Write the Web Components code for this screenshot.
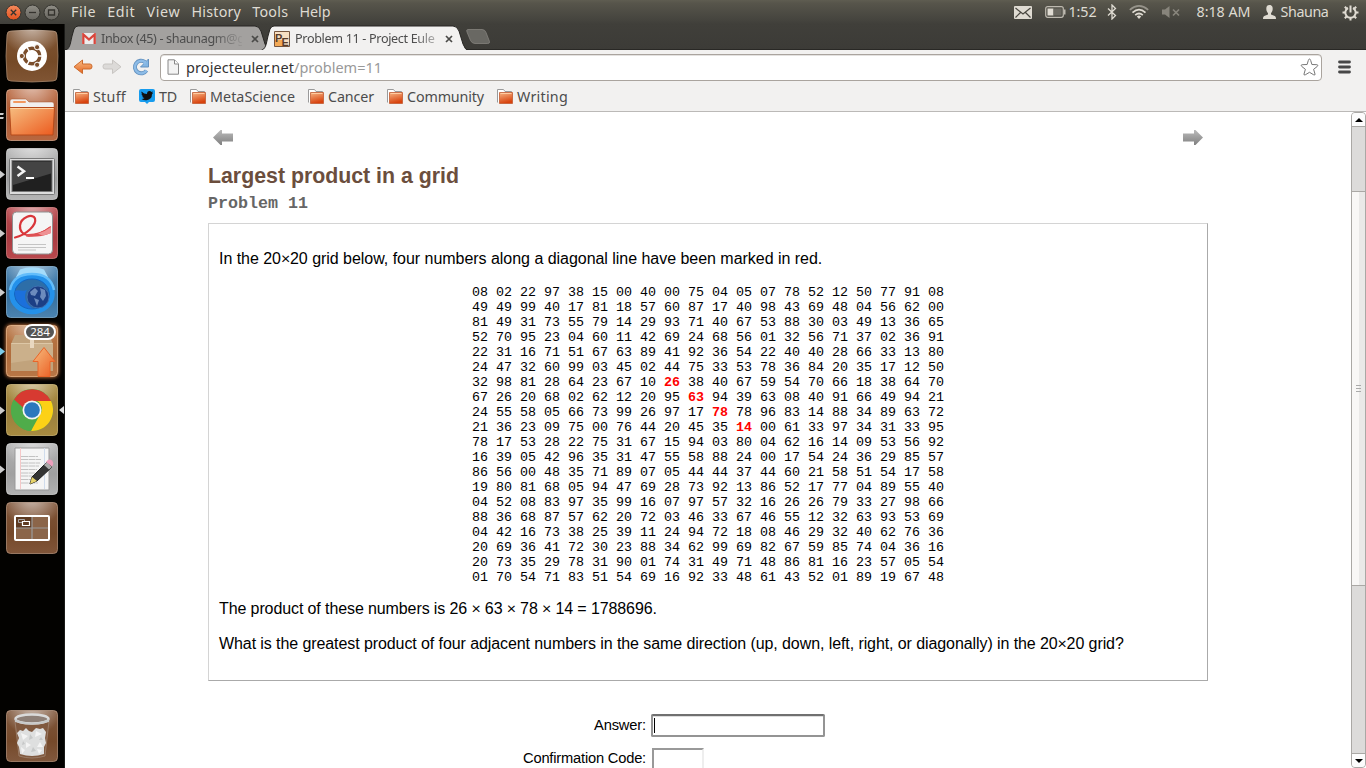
<!DOCTYPE html>
<html lang="en">
<head>
<meta charset="utf-8">
<title>Problem 11 - Project Euler</title>
<style>
html,body{margin:0;height:100%;overflow:hidden;background:#000;font-family:"Noto Sans","Open Sans",sans-serif}
</style>
</head>
<body>
<ubuntu-desktop></ubuntu-desktop>
<script>
const define = (name, html, setup) => {
  const t = document.createElement('template');
  t.innerHTML = html;
  customElements.define(name, class extends HTMLElement {
    connectedCallback() {
      if (this.shadowRoot) return;
      this.attachShadow({mode: 'open'}).append(t.content.cloneNode(true));
      if (setup) setup.call(this, this.shadowRoot);
    }
  });
};

/* A single line of text spaced to an exact advance width. */
define('fit-text', `<style>:host{display:block;white-space:nowrap;flex:none}span{display:inline-block;white-space:pre}</style><span><slot></slot></span>`, function (r) {
  const w = +this.getAttribute('w'), s = r.querySelector('span');
  this.style.width = w + 'px';
  const n = this.textContent.length;
  s.style.letterSpacing = ((w - s.getBoundingClientRect().width) / n) + 'px';
});

define('times-sign', `<style>:host{display:inline-block;width:9px;text-align:center;letter-spacing:0;color:#000;font:400 16px/16px Lato,"Liberation Sans",sans-serif}</style><slot></slot>`);

define('window-button', `<style>:host{display:block;width:17px;height:17px}svg{display:block}</style>
<svg width="17" height="17" viewBox="0 0 17 17"><defs><linearGradient id="c" x2="0" y2="1"><stop offset="0" stop-color="#f58a5c"/><stop offset="1" stop-color="#e2521f"/></linearGradient><linearGradient id="g" x2="0" y2="1"><stop offset="0" stop-color="#908e86"/><stop offset="1" stop-color="#66645e"/></linearGradient></defs>
<circle id="b" cx="8.5" cy="8.5" r="7.5" stroke="#35342f" stroke-width="1"/><path id="p" fill="none" stroke="#35332e" stroke-width="1.3"/></svg>`, function (r) {
  const k = this.getAttribute('kind');
  r.getElementById('b').setAttribute('fill', k === 'close' ? 'url(#c)' : 'url(#g)');
  r.getElementById('p').setAttribute('d', {close: 'M5.8 5.8l5.4 5.4M11.2 5.8l-5.4 5.4', min: 'M5 8.5h7', max: 'M5.5 6h6v5h-6z'}[k]);
});

define('top-panel', `<style>
:host{display:flex;align-items:center;height:24px;box-sizing:border-box;padding:0 7.500px 0 5px;background:linear-gradient(#5f5d51 0,#57554b 3px,#45443e 20px,#403f3a 24px);color:#dfdbd2;font-size:14.3px;line-height:24px}
.w{display:flex;gap:2px;margin-right:11px}nav{display:flex}nav fit-text{margin-right:11.2px}.r{display:flex;margin-left:auto;align-items:center}svg{display:block;flex:none}
</style>
<div class="w"><window-button kind="close"></window-button><window-button kind="min"></window-button><window-button kind="max"></window-button></div>
<nav><fit-text w="25">File</fit-text><fit-text w="28">Edit</fit-text><fit-text w="34">View</fit-text><fit-text w="49.5">History</fit-text><fit-text w="36">Tools</fit-text><fit-text w="31">Help</fit-text></nav>
<div class="r">
<svg width="18" height="13" viewBox="0 0 18 13"><rect width="18" height="13" rx="1" fill="#dfdbd2"/><path d="M1.5 2l7.5 6 7.5-6M1.5 11.5l5-5M16.5 11.5l-5-5" fill="none" stroke="#48463f" stroke-width="1.2"/></svg>
<svg style="margin-left:13px" width="21" height="12" viewBox="0 0 21 12"><rect x=".7" y=".7" width="17.6" height="10.6" rx="2" fill="none" stroke="#bdb9af" stroke-width="1.2"/><rect x="2.5" y="2.5" width="6" height="7" fill="#dfdbd2"/><path d="M8.500 2.500h8v7h-8z" fill="#6b6961"/><rect x="19" y="3.500" width="1.500" height="5" fill="#bdb9af"/></svg>
<fit-text style="margin-left:3px" w="28">1:52</fit-text>
<svg style="margin-left:10px" width="10" height="16" viewBox="0 0 10 16"><path d="M1 4.500l7.500 7L5 15V1l3.500 3.500L1 11.500" fill="none" stroke="#dfdbd2" stroke-width="1.300"/></svg>
<svg style="margin-left:12px" width="20" height="14" viewBox="0 0 20 14"><g fill="none" stroke-width="1.700"><path d="M.8 4.800Q10-3 19.200 4.800" stroke="#96938a"/><path d="M3.500 7.600Q10 1.800 16.500 7.600" stroke="#dfdbd2"/><path d="M6.200 10.200Q10 6.800 13.800 10.200" stroke="#dfdbd2"/></g><path d="M7.800 11.500Q10 9.700 12.200 11.500L10 14z" fill="#dfdbd2"/></svg>
<svg style="margin-left:13px" width="19" height="12" viewBox="0 0 19 12"><path d="M0 3.500h3L7.500 0v12L3 8.500H0z" fill="#88857c"/><path d="M11 3.500l6 6M17 3.500l-6 6" stroke="#88857c" stroke-width="1.700"/></svg>
<fit-text style="margin-left:16px" w="54">8:18 AM</fit-text>
<svg style="margin-left:12px" width="13" height="14" viewBox="0 0 13 14"><path d="M6.500 0C4.100 0 3.300 1.600 3.300 3.800c0 2 .8 3.500 1.700 4.400v1.300L1.200 11C.4 11.400 0 12.500 0 14h13c0-1.500-.4-2.600-1.200-3L8 9.500V8.200c.9-.9 1.700-2.400 1.700-4.400C9.700 1.600 8.900 0 6.500 0z" fill="#dfdbd2"/></svg>
<fit-text style="margin-left:5px" w="48">Shauna</fit-text>
<svg style="margin-left:13px" width="17" height="17" viewBox="0 0 17 17"><g fill="none" stroke="#dfdbd2" stroke-width="2"><path d="M6 4a5.200 5.200 0 1 0 5 0"/><path d="M8.500 1.500v7"/><path d="M.5 8.500h3M13.500 8.500h3M2.800 2.800l2 2M14.200 2.800l-2 2M2.800 14.200l2-2M14.200 14.200l-2-2M8.500 13.500v3"/></g></svg>
</div>`);

const ICONS = {
ubuntu: ['#a7886f', '#754a27', '#805534', `<circle cx="26" cy="26" r="15" fill="#fff"/><circle cx="26" cy="26" r="7.800" fill="none" stroke="#7b4e2c" stroke-width="3.400"/><g stroke="#fff" stroke-width="1.500"><path d="M26 26l-6-10.400M26 26h12M26 26l-6 10.400" /></g><circle cx="26" cy="26" r="5.800" fill="#fff"/><g fill="#7b4e2c" stroke="#fff" stroke-width="1"><circle cx="15.800" cy="26" r="2.600"/><circle cx="31.100" cy="17.200" r="2.600"/><circle cx="31.100" cy="34.800" r="2.600"/></g>`],
files: ['#d8a88e', '#ad5d38', '#b9673f', `<path d="M4 12q0-2 2-2h14l3 3h23q2 0 2 2v5H4z" fill="#f1efee" stroke="#a65028" stroke-width=".5"/><rect x="7" y="12" width="13" height="2" rx="1" fill="#f2985f"/><path d="M3.500 18.500h45L47 46H5z" fill="url(#fold)" stroke="#b64a1a"/><path d="M4.500 19.500h43" stroke="#ffd2a0"/>`],
terminal: ['#d2d2d2', '#9c9c9c', '#b6b6b6', `<rect x="3.500" y="10.500" width="45" height="36" rx="1" fill="#ddd" stroke="#777"/><rect x="6" y="12.500" width="40" height="31" fill="#202020" stroke="#777"/><path d="M7 13.500h38v12L7 37z" fill="#444"/><path d="M11.500 18.500l6.500 4.700-6.500 4.800" fill="none" stroke="#f4f4f4" stroke-width="2.500"/><path d="M20 30h8" stroke="#fff" stroke-width="2"/>`],
reader: ['#d68080', '#aa3c42', '#b9484d', `<rect x="6.500" y="5" width="40" height="42" rx="4" fill="#f5f5f5" stroke="#909090"/><g fill="none" stroke="#d9363a" stroke-linecap="round"><path d="M9 30.500C20 28 31 18 29 11.500 27 6 15 10 14 18.500 13.500 24 17 28 23 28.500" stroke-width="2.200"/><path d="M22 28.500Q34 28.500 44 20.500" stroke-width="2"/></g><path d="M20 27Q33 28 45 19v7Q33 31 20 29.500z" fill="#df5053"/><path d="M32 26.500q7-2 13-6.500v6q-5 2-9 2.500z" fill="#ee9294"/><path d="M12 37.500h28M12 40.500h28M12 43h18" stroke="#c4c4c4"/>`],
globe: ['#87b5d8', '#37719f', '#4b83b0', `<path d="M10 11L14 3.500Q26-1 38 3.500L42 11z" fill="#a4dbfa"/><ellipse cx="26" cy="28" rx="20" ry="17.500" fill="#2d6ea8" stroke="#2491ea" stroke-width="5.500"/><path d="M4 24Q7 8 26 8t22 16" fill="none" stroke="#62bdfb" stroke-width="2.500"/><ellipse cx="26" cy="28" rx="17.500" ry="15" fill="#2d6ea8" stroke="#0f66c6"/><path d="M9 25c-1 11 8 18 18 17.500-8-4-10-13-6-18.500-5 2-9-1-12 1z" fill="#1b70dc"/><circle cx="32" cy="31" r="11" fill="#1c3f85" stroke="#3f6fb0"/><path d="M24 26l5-4 3 3-3 5-4-1zM34 22l5 2 1 6-3 5-3-4 1-4zM28 32l5 2-2 6z" fill="#6c8bbd"/>`],
updates: ['#e7b58a', '#b06c3c', '#b87746', `<path d="M9 10h34l4 9H5z" fill="#c0a27c"/><path d="M5 18h42v28H5z" fill="#c1a37c"/><path d="M5 18h42v14L5 38z" fill="#cbb08b"/><path d="M5.500 18.500h41" stroke="#ddc7a6"/><path d="M24 14h4v9h-4z" fill="#e9d8c0"/><path d="M38 22.500l11 14h-5v15H32v-15h-5z" fill="url(#fold)" stroke="#e8652a"/>`],
chrome: ['#d0b875', '#9b803e', '#a88b40', `<circle cx="26" cy="26" r="21" fill="#4fac4a"/><path d="M8 15.500A21 21 0 0 1 45 17H26a9 9 0 0 0-8.500 7z" fill="#d73a31"/><path d="M45 17a21 21 0 0 1-20 30l9-16.500A9 9 0 0 0 31 17z" fill="#fcd116"/><path d="M8 15.500l9.500 16A9 9 0 0 0 29 34.500L25 47A21 21 0 0 1 8 15.500z" fill="#4fac4a"/><circle cx="26" cy="26" r="9.500" fill="#f4f4f4"/><circle cx="26" cy="26" r="7.800" fill="#2b78bd"/>`],
editor: ['#d5d5d5', '#a0a0a0', '#b1b1b1', `<path d="M9 5h34v42H9z" fill="#f5f5f5" stroke="#999"/><path d="M14.500 5v41" stroke="#f5c8c8"/><path d="M38.500 5v41" stroke="#d0dcec"/><path d="M15 13.500h17M15 16.500h20M15 20h19M15 23h18M15 26.500h16M15 30h14M15 33h15M15 36.500h11M15 40h17" stroke="#c2c2c2" stroke-dasharray="7 .5"/><path d="M24 41l2-7 15-15 5 5-15 14z" fill="#343434" stroke="#222"/><path d="M24 41l2-7 5 4z" fill="#e7d36a"/><path d="M38 22l3-3 5 5-3 2.500z" fill="#aaa"/><path d="M40 19q3-4 6-1.500 2.500 3 0 6z" fill="#eda0bd"/>`],
workspace: ['#b5927a', '#75492a', '#805539', `<rect x="9" y="14" width="34" height="24" rx="1" fill="#8b6549" stroke="#fff" stroke-width="2"/><path d="M10 15h16v11H10z" fill="#5f3b22"/><path d="M26 15v22M10 26h32" stroke="#9b9b9b" stroke-width="1.200"/><path d="M12.500 17.500h6v3h-6z" fill="none" stroke="#aaa"/><path d="M16.500 19.500h7v4h-7z" fill="#5f3b22" stroke="#fff" stroke-width="1.200"/>`],
trash: ['#b5927a', '#75492a', '#80583d', `<path d="M9 11h34l-4 35q-13 4-26 0z" fill="#80593f" stroke="#a58b79" stroke-width=".7"/><path d="M11 23l3-3 3 1 3-3 3 3 3 1 4-4 4 1 3-1 3 4-1 6 1 5-2 4v7q-12 4-24 0l-1-7-2-4 2-5z" fill="#dedfdf"/><path d="M15 23l7 3-5 4zM30 21l6 3-7 3zM20 32l5 3-5 3zM34 32l3 5-6 0zM15 37l4 3-3 4zM31 39l5 1-3 4z" fill="#f4f4f4"/><path d="M24 24l3 4-4 2zM27 37l3 4-5 1zM17 31l2 3-3 1zM35 27l2 3-4 0z" fill="#c6c8c8"/><ellipse cx="26" cy="9" rx="16.500" ry="4.500" fill="#8e8078" stroke="#dadada" stroke-width="2.500"/><path d="M9 9q17 8 34 0v3q-17 5-34 0z" fill="#c7c9c9"/>`]
};
define('launcher-icon', `<style>:host{display:block;position:relative;width:65px;height:52px;flex:none}
svg.i{display:block;margin-left:6px;overflow:visible}.a{position:absolute;top:22px;left:0}.ar{position:absolute;top:22px;right:1px}
.b{position:absolute;left:24px;top:-1px;width:28px;height:12px;border:2px solid #fff;border-radius:8px;background:#555;color:#fff;font:11.500px/12px "Noto Sans",sans-serif;text-align:center}
:host([glow]) .i{filter:drop-shadow(0 0 2px #ff9650)}</style>`, function (r) {
  const [hi, mid, low, art] = ICONS[this.getAttribute('name')];
  const mark = this.getAttribute('mark'), badge = this.getAttribute('badge');
  const shape = this.getAttribute('name') === 'ubuntu' ? '<path d="M5 1Q26-1 47 1q4 0 4 4 2 21 0 42 0 4-4 4-21 2-42 0-4 0-4-4-2-21 0-42 0-4 4-4z"' : '<rect x=".5" y=".5" width="51" height="51" rx="4"';
  const h = document.createElement('template');
  h.innerHTML = `<svg class="i" width="52" height="52" viewBox="0 0 52 52"><defs><radialGradient id="s" cx=".5" cy="-.1" r=".6"><stop offset="0" stop-color="#fff" stop-opacity=".6"/><stop offset="1" stop-color="#fff" stop-opacity="0"/></radialGradient><linearGradient id="bg" x2="0" y2="1"><stop offset="0" stop-color="${low}"/><stop offset=".6" stop-color="${mid}"/><stop offset="1" stop-color="${low}"/></linearGradient><linearGradient id="fold" x2="1" y2="1"><stop offset="0" stop-color="#f6bd80"/><stop offset="1" stop-color="#ec5a1e"/></linearGradient></defs>${shape} fill="url(#bg)" stroke="${hi}" stroke-opacity=".75"/>${shape} fill="url(#s)"/>${art}</svg>`
    + (mark ? `<svg class="a" width="5" height="9"><path d="${mark === 'two' ? 'M0 2h3l1 .5L3 4H0zM0 6h3l1 .5L3 8H0z' : 'M0 .5l5 4-5 4z'}" fill="${mark === 'blue' ? '#7ccbe8' : '#ccc'}"/></svg>` : '')
    + (this.hasAttribute('active') ? '<svg class="ar" width="5" height="8"><path d="M5 0v8L0 4z" fill="#ddd"/></svg>' : '')
    + (badge ? `<div class="b">${badge}</div>` : '');
  r.append(h.content);
});

define('app-launcher', `<style>:host{display:flex;flex-direction:column;gap:7px;box-sizing:border-box;padding:6px 0;width:65px;background:#030200;border-right:1px solid #1a1a18}.t{margin-top:auto}</style>
<launcher-icon name="ubuntu"></launcher-icon><launcher-icon name="files" mark="two"></launcher-icon><launcher-icon name="terminal" mark="one"></launcher-icon><launcher-icon name="reader" mark="one"></launcher-icon><launcher-icon name="globe" mark="one"></launcher-icon><launcher-icon name="updates" mark="blue" badge="284" glow></launcher-icon><launcher-icon name="chrome" mark="one" active></launcher-icon><launcher-icon name="editor" mark="one"></launcher-icon><launcher-icon name="workspace"></launcher-icon><launcher-icon class="t" name="trash"></launcher-icon>`);

define('browser-tab', `<style>:host{display:grid;height:26px;flex:none}:host>*{grid-area:1/1}svg{display:block}
.c{display:flex;align-items:center;padding:2px 0 0 17px;font-size:12.600px;line-height:20px;color:#4c4c4c}.f{width:141px;margin-left:5px;overflow:hidden;-webkit-mask-image:linear-gradient(90deg,#000 112px,transparent 144px)}.x{margin-left:9px}
.c{padding-top:3px}:host([active]) .c{padding:3px 0 0 13px}:host([active]) .f{-webkit-mask-image:linear-gradient(90deg,#000 118px,transparent 155px)}:host([active]) .x{margin-left:9px}</style>
<svg id="s" height="26"><path stroke="#262522"/></svg><div class="c"><slot name="icon"></slot><div class="f"><slot></slot></div><svg class="x" width="8" height="8"><path d="M1 1l6 6M7 1L1 7" stroke="#4a4a48" stroke-width="1.700"/></svg></div>`, function (r) {
  const w = +this.getAttribute('w'), a = this.hasAttribute('active'), s = r.getElementById('s'), p = s.firstChild;
  s.setAttribute('width', w);
  p.setAttribute('fill', a ? '#f2f1f0' : '#a3a19f');
  p.setAttribute('d', `M-1 27C5 25 5 21 7 12L9 5Q10.500 2 13 2H${w - 15}Q${w - 11} 2 ${w - 9} 7L${w - 5} 20Q${w - 3} 26 ${w + 1} 27`);
});

define('tab-strip', `<style>:host{display:flex;height:26px;background:linear-gradient(#403f3a,#3c3b37);box-shadow:inset 0 -1px #292825}.s{margin-left:-9px;z-index:1}svg{display:block}.n{margin:5px 0 0 -3px}</style>
<browser-tab w="205"><svg slot="icon" width="14" height="11" viewBox="0 0 14 11"><path d="M0 0h14v11H0z" fill="#ececec"/><path d="M1.300 11V1.500L7 6.500l5.700-5V11" fill="none" stroke="#d8463c" stroke-width="2.300"/></svg><fit-text w="155">Inbox (45) - shaunagm@gm</fit-text></browser-tab>
<browser-tab class="s" w="207" active><svg slot="icon" width="16" height="16" viewBox="0 0 16 16"><path d="M.5.5h15v15H.5z" fill="#f7dfc3" stroke="#765640"/><path d="M1 9h7v6H1z" fill="#f3a956"/><text x="1" y="10.500" font-family="Liberation Sans" font-weight="bold" font-size="11" fill="#583b29">P</text><text x="7.500" y="14.500" font-family="Liberation Sans" font-weight="bold" font-size="11" fill="#583b29">E</text></svg><fit-text w="139.500">Problem 11 - Project Eule</fit-text></browser-tab>
<svg class="n" width="26" height="15"><path d="M3 .5h14q3 0 4 3l3.500 9q.5 2-2 2H10q-3 0-4.500-3L2 3Q1 .5 3 .5z" fill="#696863" stroke="#85837e" stroke-width=".8"/></svg>`);

define('tool-bar', `<style>:host{display:flex;align-items:center;height:34px;box-sizing:border-box;padding:0 14px 0 8px;background:#f2f1f0}
svg{display:block;flex:none}.o{display:flex;align-items:center;width:1162px;height:27px;box-sizing:border-box;border:1px solid #aaa49e;border-radius:4px;background:#fff;box-shadow:inset 0 1px #e4e2e0;font-size:14.500px;line-height:24px;margin:1px 16px 0 10px;padding:0 2px 1px 6px;color:#333}.g{color:#999}.st{margin-left:auto}</style>
<svg width="20" height="16" viewBox="0 0 20 16"><defs><linearGradient id="o" x2="0" y2="1"><stop stop-color="#f9bd86"/><stop offset="1" stop-color="#e4641f"/></linearGradient></defs><path d="M9.500 1v4H17q2 0 2 2.500T17 10H9.500v4.500L1 7.800z" fill="url(#o)" stroke="#cc6a2c" stroke-linejoin="round"/></svg>
<svg style="margin-left:9px" width="20" height="16" viewBox="0 0 20 16"><path d="M10.500 1v4H3Q1 5 1 7.500T3 10h7.500v4.500L19 7.800z" fill="#dcdad8" stroke="#c8c5c2" stroke-linejoin="round"/></svg>
<svg style="margin-left:10px" width="18" height="18" viewBox="0 0 18 18"><path d="M14.500 12.500A6.300 6.300 0 1 1 13 4" fill="none" stroke="#6391bf" stroke-width="4"/><path d="M16.500 1v8H8.500z" fill="#82b5e3" stroke="#6391bf"/><path d="M14.500 12.500A6.300 6.300 0 1 1 13 4l-1 2" fill="none" stroke="#8dbce7" stroke-width="2.400"/></svg>
<div class="o"><svg width="12" height="16" viewBox="0 0 12 16"><path d="M1 .8h6.500L11.500 5v10.200H1z" fill="#f3f3f3" stroke="#888"/><path d="M7.500 1v4h4" fill="#fff" stroke="#888"/></svg><fit-text style="margin-left:7px" w="108">projecteuler.net</fit-text><fit-text class="g" w="88">/problem=11</fit-text>
<svg class="st" width="19" height="18" viewBox="0 0 19 18"><path d="M9.500 1q.8 0 1.200 1.500l1.200 4 5 .2q2 .5.300 1.800l-3.600 2.800 1.400 4.700q.2 1.600-1.300.8L9.500 14.300l-4.200 2.500q-1.500.8-1.300-.8l1.400-4.700-3.600-2.800q-1.700-1.300.3-1.800l5-.2 1.200-4Q8.700 1 9.500 1z" fill="#fff" stroke="#777"/></svg></div>
<svg width="13" height="14"><path d="M1.500 2h10M1.500 7h10M1.500 12h10" stroke="#474747" stroke-width="2.800" stroke-linecap="round"/></svg>`);

define('bookmark-item', `<style>:host{display:flex;align-items:center;flex:none}svg{display:block;margin-right:4px}</style><svg id="i" width="16" height="15" viewBox="0 0 16 15"></svg><slot></slot>`, function (r) {
  r.getElementById('i').innerHTML = this.hasAttribute('bird')
    ? '<path d="M2 0h12q2 0 2 2v9q0 2-2 2h-4l-2 2-2-2H2q-2 0-2-2V2q0-2 2-2z" fill="#179cee"/><path d="M2.500 2.500Q5 5 8 5q0-3 2.500-3 1.200 0 2 1l1.500-.5-.8 1.500.8.300-1 1q0 5.200-5.500 6-3 .2-5-1.300 2 0 3-.9-2-.4-2.300-1.800h1Q2.500 6.500 2.500 4.800l.8.300Q2 4 2.500 2.500z" fill="#111"/>'
    : '<defs><linearGradient id="q" x2=".3" y2="1"><stop stop-color="#f6b685"/><stop offset="1" stop-color="#d8420d"/></linearGradient></defs><path d="M.5 13.500V.5h6l1.500 2h6.500v3" fill="#fff" stroke="#9a9a9a"/><path d="M2.500 3.500h13v11h-13z" fill="url(#q)" stroke="#c25a31" stroke-width=".8"/><path d="M3.500 4.500h11" stroke="#ffcba0"/>';
});
define('bookmarks-bar', `<style>:host{display:flex;align-items:center;height:28px;box-sizing:border-box;padding:0 8px 2px;background:#f2f1f0;border-bottom:1px solid #bbb9b7;color:#4c4c4c;font-size:14.300px;line-height:24px}bookmark-item{margin-right:13px}</style>
<bookmark-item><fit-text w="33">Stuff</fit-text></bookmark-item><bookmark-item bird><fit-text w="18">TD</fit-text></bookmark-item><bookmark-item><fit-text w="85">MetaScience</fit-text></bookmark-item><bookmark-item><fit-text w="46">Cancer</fit-text></bookmark-item><bookmark-item><fit-text w="77">Community</fit-text></bookmark-item><bookmark-item><fit-text w="51">Writing</fit-text></bookmark-item>`);

define('number-grid', `<style>:host{display:block;font:13.333px/15px "Liberation Mono",monospace;text-align:center;white-space:pre}b{color:#f00}</style>`, function (r) {
  const rows = `08 02 22 97 38 15 00 40 00 75 04 05 07 78 52 12 50 77 91 08
49 49 99 40 17 81 18 57 60 87 17 40 98 43 69 48 04 56 62 00
81 49 31 73 55 79 14 29 93 71 40 67 53 88 30 03 49 13 36 65
52 70 95 23 04 60 11 42 69 24 68 56 01 32 56 71 37 02 36 91
22 31 16 71 51 67 63 89 41 92 36 54 22 40 40 28 66 33 13 80
24 47 32 60 99 03 45 02 44 75 33 53 78 36 84 20 35 17 12 50
32 98 81 28 64 23 67 10 26 38 40 67 59 54 70 66 18 38 64 70
67 26 20 68 02 62 12 20 95 63 94 39 63 08 40 91 66 49 94 21
24 55 58 05 66 73 99 26 97 17 78 78 96 83 14 88 34 89 63 72
21 36 23 09 75 00 76 44 20 45 35 14 00 61 33 97 34 31 33 95
78 17 53 28 22 75 31 67 15 94 03 80 04 62 16 14 09 53 56 92
16 39 05 42 96 35 31 47 55 58 88 24 00 17 54 24 36 29 85 57
86 56 00 48 35 71 89 07 05 44 44 37 44 60 21 58 51 54 17 58
19 80 81 68 05 94 47 69 28 73 92 13 86 52 17 77 04 89 55 40
04 52 08 83 97 35 99 16 07 97 57 32 16 26 26 79 33 27 98 66
88 36 68 87 57 62 20 72 03 46 33 67 46 55 12 32 63 93 53 69
04 42 16 73 38 25 39 11 24 94 72 18 08 46 29 32 40 62 76 36
20 69 36 41 72 30 23 88 34 62 99 69 82 67 59 85 74 04 36 16
20 73 35 29 78 31 90 01 74 31 49 71 48 86 81 16 23 57 05 54
01 70 54 71 83 51 54 69 16 92 33 48 61 43 52 01 89 19 67 48`.split('\n');
  rows.forEach((line, y) => {
    const d = document.createElement('div'), n = line.split(' ');
    if (y > 5 && y < 10) n[y + 2] = `<b>${n[y + 2]}</b>`;
    d.innerHTML = n.join(' ');
    r.append(d);
  });
});

define('scroll-bar', `<style>:host{display:flex;flex-direction:column;width:15px;height:656px;box-sizing:border-box;border:1px solid #aaa8a5;border-radius:4px;background:#dcdbda;flex:none}
.b{height:13px;display:flex;align-items:center;justify-content:center;background:#fcfcfc;border-radius:3px}.b.u{border-bottom:1px solid #aaa8a5;border-radius:3px 3px 0 0}.b.d{border-top:1px solid #aaa8a5;border-radius:0 0 3px 3px;margin-top:auto}
.t{margin-top:64px;height:393px;border:solid #aaa8a5;border-width:1px 0;background:linear-gradient(90deg,#f8f7f6 7px,#eae9e8 7px);display:flex;align-items:center;justify-content:center}svg{display:block}</style>
<div class="b u"><svg width="8" height="4"><path d="M0 4h8L4 0z"/></svg></div><div class="t"><svg width="5" height="8"><path d="M0 .5h5M0 3.500h5M0 6.500h5" stroke="#aaa"/></svg></div><div class="b d"><svg width="8" height="4"><path d="M0 0h8L4 4z"/></svg></div>`);

define('problem-page', `<style>:host{display:block;width:1000px;margin:0 auto;font-family:"Liberation Sans",sans-serif;color:#000}
.n{display:flex;justify-content:space-between;padding:17px 5px 1px}svg{display:block}
h1{margin:17px 0 0;font-size:21.333px;line-height:26px;color:#6b4e3d}h2{margin:6px 0 0;font:bold 16.667px/18px "Liberation Mono",monospace;color:#666}
.box{box-sizing:border-box;height:458px;margin-top:10px;border:1px solid;border-color:#d4d4d4 #aaa #aaa #d4d4d4;padding:25px 10px 0;font-size:16px;line-height:20px}
number-grid{margin:16px 0 14px}p{margin:0 0 15px}
form{display:grid;grid-template-columns:438px auto;column-gap:6px;justify-content:start;margin-top:33px;font-size:14.700px;line-height:23px}label{display:flex;justify-content:flex-end}
.a{margin-left:-1px;width:174px;height:23px;box-sizing:border-box;border:2px solid #949494;border-top-color:#707070;border-radius:2px;padding:2px 1px;box-shadow:inset 0 1px #ddd}.a span{display:block;width:1px;height:15px;background:#000}
.k{width:52px;height:23px;box-sizing:border-box;border:2px solid #999;border-right-color:#eee;border-bottom-color:#eee;margin-top:11px}.l{margin-top:10px}</style>
<div class="n"><svg width="20" height="16"><defs><linearGradient id="a" x2="0" y2="1"><stop stop-color="#bbb"/><stop offset="1" stop-color="#808080"/></linearGradient></defs><path d="M0 8.500l7.500-7.500H9v3.500h11v8H9V16H7.500z" fill="url(#a)"/></svg><svg width="20" height="16"><path d="M20 8.500l-7.500-7.500H11v3.500H0v8h11V16h1.500z" fill="url(#a)"/></svg></div>
<h1><fit-text w="251">Largest product in a grid</fit-text></h1><h2>Problem 11</h2>
<div class="box"><p><fit-text w="603.5">In the 20<times-sign>×</times-sign>20 grid below, four numbers along a diagonal line have been marked in red.</fit-text></p><number-grid></number-grid><p><fit-text w="438.5">The product of these numbers is 26 <times-sign>×</times-sign> 63 <times-sign>×</times-sign> 78 <times-sign>×</times-sign> 14 = 1788696.</fit-text></p><p><fit-text w="905">What is the greatest product of four adjacent numbers in the same direction (up, down, left, right, or diagonally) in the 20<times-sign>×</times-sign>20 grid?</fit-text></p></div>
<form><label><fit-text w="52">Answer:</fit-text></label><div class="a"><span></span></div><label class="l"><fit-text w="123">Confirmation Code:</fit-text></label><div class="k"></div></form>`);

define('browser-window', `<style>:host{display:flex;flex-direction:column;min-width:0;height:744px;overflow:hidden;background:#fff}.v{display:flex;height:656px;overflow:hidden}.p{width:1286px;flex:none}</style>
<tab-strip></tab-strip><tool-bar></tool-bar><bookmarks-bar></bookmarks-bar><div class="v"><div class="p"><problem-page></problem-page></div><scroll-bar></scroll-bar></div>`);

define('ubuntu-desktop', `<style>:host{display:grid;width:1366px;height:768px;grid-template:24px 744px/65px 1301px;overflow:hidden}top-panel{grid-column:1/3}</style><top-panel></top-panel><app-launcher></app-launcher><browser-window></browser-window>`);
</script>
</body>
</html>
